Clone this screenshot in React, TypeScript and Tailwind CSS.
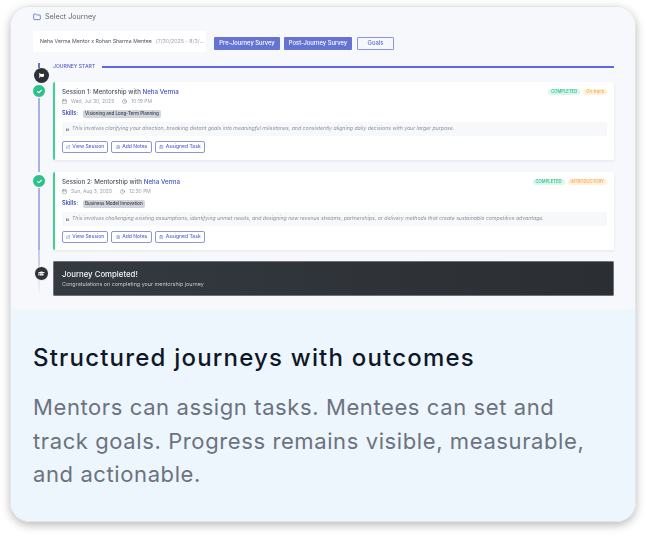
import React from 'react';
import { Calendar, Clock, ExternalLink, FileText, Folder, ClipboardList, ChevronDown } from 'lucide-react';
import { FaCheck, FaFlag, FaGraduationCap, FaQuoteLeft } from 'react-icons/fa';

type Session = {
  title: string;
  date: string;
  time: string;
  skill: string;
  note: string;
  tag: string;
};

const sessions: Session[] = [
  {
    title: 'Session 1: Mentorship with',
    date: 'Wed, Jul 30, 2025',
    time: '10:19 PM',
    skill: 'Visioning and Long-Term Planning',
    note: 'This involves clarifying your direction, breaking distant goals into meaningful milestones, and consistently aligning daily decisions with your larger purpose.',
    tag: 'On-track',
  },
  {
    title: 'Session 2: Mentorship with',
    date: 'Sun, Aug 3, 2025',
    time: '12:30 PM',
    skill: 'Business Model Innovation',
    note: 'This involves challenging existing assumptions, identifying unmet needs, and designing new revenue streams, partnerships, or delivery methods that create sustainable competitive advantage.',
    tag: 'INTRODUCTORY',
  },
];

const actions = [
  { label: 'View Session', icon: ExternalLink, width: 'w-[46px]' },
  { label: 'Add Notes', icon: FileText, width: 'w-[41px]' },
  { label: 'Assigned Task', icon: ClipboardList, width: 'w-[50px]' },
];

const SessionRow = ({ session }: { session: Session }) => (
  <div className="flex">
    <div className="mr-[8px] flex w-[12px] shrink-0 flex-col items-center">
      <div className="z-10 mt-[2px] flex h-[14px] w-[14px] shrink-0 items-center justify-center rounded-full border border-white bg-[#2fc18c] text-white">
        <FaCheck className="h-[5px] w-[5px]" />
      </div>
      <div className="mt-[-1px] w-[2px] grow bg-[#a8b0e6]" />
    </div>
    <div className="flex h-[78px] w-[561px] flex-col rounded-[2px] border-l-2 border-[#3fcf98] bg-white pl-[7px] pr-[7px] pt-[6px] shadow-[0_1px_3px_rgba(0,0,0,0.08)]">
      <div className="flex h-[8px] items-center justify-between">
        <p className="text-[6.2px] font-medium text-[#4b5563]">
          {session.title} <span className="text-[#4453c4]">Neha Verma</span>
        </p>
        <div className="flex gap-[3px]">
          <span className="rounded-full bg-[#d9f7ea] px-[3px] text-[4.2px] font-medium leading-[6px] text-[#2fbf8a]">COMPLETED</span>
          <span className="rounded-full bg-[#fff1dc] px-[3px] text-[4.2px] font-medium leading-[6px] text-[#f5ad4e]">{session.tag}</span>
        </div>
      </div>
      <div className="mt-[2px] flex h-[7px] items-center text-[5px] text-[#9ca3af]">
        <Calendar className="mr-[4px] h-[5px] w-[5px] text-[#6b7280]" />
        {session.date}
        <Clock className="ml-[8px] mr-[4px] h-[5px] w-[5px] text-[#6b7280]" />
        {session.time}
      </div>
      <div className="mt-[4px] flex h-[9px] items-center">
        <span className="mr-[5px] text-[5.6px] font-semibold text-[#3f4fc0]">Skills:</span>
        <span className="rounded-[2px] bg-[#d1d5db] px-[2px] text-[4.5px] font-medium leading-[8px] text-[#374151]">{session.skill}</span>
      </div>
      <div className="mt-[4px] flex h-[14px] items-center rounded-[1px] bg-[#f7f8fa] pl-[4px] text-[5.2px] italic text-[#8b929e]">
        <FaQuoteLeft className="mr-[3px] h-[3px] w-[3px] text-[#6b7280]" />
        <span className="whitespace-nowrap">{session.note}</span>
      </div>
      <div className="mt-[5px] flex gap-[3px]">
        {actions.map(({ label, icon: Icon, width }) => (
          <button
            key={label}
            className={`flex h-[12px] items-center justify-center gap-[2px] rounded-[2px] border border-[#8b95de] text-[5px] font-medium text-[#5a68d0] ${width}`}
          >
            <Icon className="h-[4.5px] w-[4.5px]" />
            {label}
          </button>
        ))}
      </div>
    </div>
  </div>
);

export default function App() {
  return (
    <div className="h-[536px] w-[646px] bg-white pl-[10px] pt-[6px] font-['Inter',sans-serif]">
      <div className="flex h-[516px] w-[626px] flex-col overflow-hidden rounded-[20px] border border-[#e4e5e8] shadow-[0_3px_10px_rgba(0,0,0,0.28)]">
        <div className="h-[302px] shrink-0 bg-[#f7f8fb] pl-[22px] pt-[5px] blur-[0.3px]">
          <div className="flex h-[10px] items-center gap-[4px] text-[7.2px] text-[#5f6670]">
            <Folder className="h-[8px] w-[8px] text-[#3f4fc0]" />
            Select Journey
          </div>
          <div className="mt-[9px] flex h-[21px] items-start">
            <div className="flex h-[21px] w-[173px] items-center whitespace-nowrap bg-white pl-[7px] text-[5.25px] text-[#4b5563]">
              <span>Neha Verma Mentor x Rohan Sharma Mentee</span>
              <span className="ml-[4px] text-[#9ca3af]">(7/30/2025 - 8/3/...</span>
              <ChevronDown className="ml-[3px] h-[4px] w-[4px]" />
            </div>
            <div className="ml-[8px] mt-[6px] flex gap-[4px] text-[5.8px] font-medium">
              <span className="flex h-[13px] w-[66px] items-center justify-center rounded-[1px] bg-[#6573d2] text-white">Pre-Journey Survey</span>
              <span className="flex h-[13px] w-[68px] items-center justify-center rounded-[1px] bg-[#6573d2] text-white">Post-Journey Survey</span>
              <span className="ml-[1px] flex h-[13px] w-[37px] items-center justify-center rounded-[1px] border border-[#8b95de] text-[#5a68d0]">Goals</span>
            </div>
          </div>

          <div className="relative flex h-[30px] items-center pl-[20px]">
            <span className="mr-[7px] whitespace-nowrap text-[5.1px] font-medium text-[#5563c9]">JOURNEY START</span>
            <div className="mr-[21px] h-[1.5px] grow bg-[#5a6ae0]" />
            <div className="absolute left-[5px] top-[11px] h-[5px] w-[2px] bg-[#6674d9]" />
            <div className="absolute left-[0.5px] top-[15.5px] z-20 flex h-[15px] w-[15px] items-center justify-center rounded-full bg-[#2e3238] text-white">
              <FaFlag className="h-[5px] w-[5px]" />
            </div>
          </div>

          <SessionRow session={sessions[0]} />
          <div className="flex h-[12px]">
            <div className="ml-[5px] w-[2px] bg-[#a8b0e6]" />
          </div>
          <SessionRow session={sessions[1]} />
          <div className="flex h-[11px]">
            <div className="ml-[5px] w-[2px] bg-[#c8cdef]" />
          </div>
          <div className="flex">
            <div className="relative mr-[8px] flex w-[12px] shrink-0 flex-col items-center">
              <div className="w-[2px] grow bg-gradient-to-b from-[#c8cdef] to-transparent" />
              <div className="absolute left-[0.5px] top-[4.5px] flex h-[15px] w-[15px] items-center justify-center rounded-full border border-white bg-[#2e3238] text-white">
                <FaGraduationCap className="h-[7px] w-[7px]" />
              </div>
            </div>
            <div className="flex h-[35px] w-[561px] flex-col justify-center rounded-[1px] border border-[#6b7280] bg-gradient-to-r from-[#343a40] to-[#2b2e33] pl-[8px]">
              <p className="text-[7.8px] font-medium leading-[11px] text-[#f3f4f6]">Journey Completed!</p>
              <p className="mt-[1px] text-[5.4px] leading-[7px] text-[#c4c8ce]">Congratulations on completing your mentorship journey</p>
            </div>
          </div>
        </div>

        <div className="grow bg-[#eef6fd] pl-[22px] pt-[33px]">
          <h2 className="text-[24px] font-medium leading-[32px] tracking-[1.2px] text-[#0f172a]">Structured journeys with outcomes</h2>
          <p className="mt-[17px] w-[556px] text-[22px] leading-[33.5px] tracking-[0.6px] text-[#6b7280]">
            Mentors can assign tasks. Mentees can set and track goals. Progress remains visible, measurable, and actionable.
          </p>
        </div>
      </div>
    </div>
  );
}
